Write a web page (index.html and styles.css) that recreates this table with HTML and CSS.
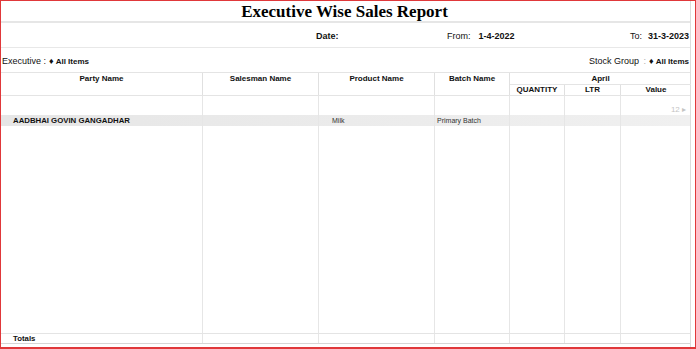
FILE: index.html
```html
<!DOCTYPE html>
<html>
<head>
<meta charset="utf-8">
<link rel="stylesheet" href="styles.css">
</head>
<body>
<div class="frame">
  <div class="sheet">
    <div class="title">Executive Wise Sales Report</div>
    <div class="daterow">
      <span class="date b">Date:</span>
      <span class="from">From:<span class="b val">1-4-2022</span></span>
      <span class="to">To:<span class="b val">31-3-2023</span></span>
    </div>
    <div class="filterrow">
      <span class="exec">Executive :<span class="dia">♦</span><span class="b">All Items</span></span>
      <span class="stock">Stock Group <span class="colon">:</span><span class="dia">♦</span><span class="b">All Items</span></span>
    </div>
    <div class="head">
      <div class="hc c1">Party Name</div>
      <div class="hc c2">Salesman Name</div>
      <div class="hc c3">Product Name</div>
      <div class="hc c4">Batch Name</div>
      <div class="hc april">April</div>
      <div class="sh c5">QUANTITY</div>
      <div class="sh c6">LTR</div>
      <div class="sh c7">Value</div>
    </div>
    <div class="row blank">
      <div></div><div></div><div></div><div></div><div></div><div></div><div class="more">12 ▸</div>
    </div>
    <div class="row data">
      <div class="party">AADBHAI GOVIN GANGADHAR</div><div></div><div class="sm">Milk</div><div class="sm batch">Primary Batch</div><div></div><div></div><div></div>
    </div>
    <div class="row filler">
      <div></div><div></div><div></div><div></div><div></div><div></div><div></div>
    </div>
    <div class="row totals">
      <div class="party">Totals</div><div></div><div></div><div></div><div></div><div></div><div></div>
    </div>
    <div class="foot"></div>
  </div>
</div>
</body>
</html>
```

FILE: styles.css
```css
* { box-sizing: border-box; }
html, body { margin: 0; padding: 0; background: #fff; }
body { font-family: "Liberation Sans", Arial, sans-serif; color: #111; }
.frame {
  width: 696px; height: 349px;
  border-left: 1px solid #e0383a;
  border-top: 1px solid #e0383a;
  border-right: 1px solid #e0383a;
  border-bottom: 2px solid #e0383a;
  padding-right: 4px;
  overflow: hidden;
}
.sheet { width: 690px; height: 346px; border-right: 1px solid #dcdcdc; }
.b { font-weight: bold; }
.title {
  height: 22px;
  border-bottom: 2px solid #e6e6e6;
  text-align: center;
  font-family: "Liberation Serif", "Times New Roman", serif;
  font-weight: bold;
  font-size: 17px;
  line-height: 21px;
  color: #000;
  padding-right: 2px;
}
.daterow {
  height: 25px;
  border-bottom: 1px solid #e8e8e8;
  display: flex;
  align-items: center;
  font-size: 9px;
  padding-top: 1px;
}
.date { margin-left: 315px; width: 131px; }
.from .val { margin-left: 8px; }
.to { margin-left: auto; padding-right: 1px; }
.to .val { margin-left: 6px; }
.filterrow {
  height: 25px;
  border-bottom: 1px solid #e4e4e4;
  display: flex;
  align-items: center;
  font-size: 9px;
  padding-top: 1px;
  justify-content: space-between;
}
.exec { margin-left: 1px; }
.dia { font-size: 9px; margin: 0 2px 0 3px; }
.colon { color: #aaa; margin-left: 2px; }
.stock { padding-right: 1px; }
.stock .b, .exec .b { font-size: 8px; }
.head {
  height: 23px;
  border-bottom: 1px solid #e4e4e4;
  display: grid;
  grid-template-columns: 202px 116px 116px 75px 55px 56px 70px;
  grid-template-rows: 12px 10px;
  font-size: 8px;
  font-weight: bold;
}
.hc { text-align: center; line-height: 11px; border-right: 1px solid #e0e0e0; }
.c1 { grid-column: 1; grid-row: 1 / 3; }
.c2 { grid-column: 2; grid-row: 1 / 3; }
.c3 { grid-column: 3; grid-row: 1 / 3; }
.c4 { grid-column: 4; grid-row: 1 / 3; }
.april { grid-column: 5 / 8; grid-row: 1; border-right: 0; border-bottom: 1px solid #e4e4e4; }
.sh { grid-row: 2; text-align: center; line-height: 10px; border-right: 1px solid #e0e0e0; }
.c7 { border-right: 0; }
.row {
  display: grid;
  grid-template-columns: 202px 116px 116px 75px 55px 56px 70px;
}
.row > div { border-right: 1px solid #e6e6e6; }
.row > div:last-child { border-right: 0; }
.blank { height: 19px; }
.more { font-size: 8px; color: #c4c4c4; text-align: right; padding: 9px 5px 0 0; line-height: 9px; }
.data { height: 11px; background: linear-gradient(to right, #e6e6e6, #ececec 60%, #f0f0f0); font-size: 8px; line-height: 11px; }
.party { font-weight: bold; padding-left: 12px; font-size: 7.8px; }
.sm { font-size: 7px; color: #333; padding-left: 13px; }
.batch { padding-left: 2px; }
.filler { height: 207px; }
.totals { height: 11px; border-top: 1px solid #e4e4e4; border-bottom: 1px solid #d6d6d6; line-height: 9px; }
.foot { height: 3px; }
```
